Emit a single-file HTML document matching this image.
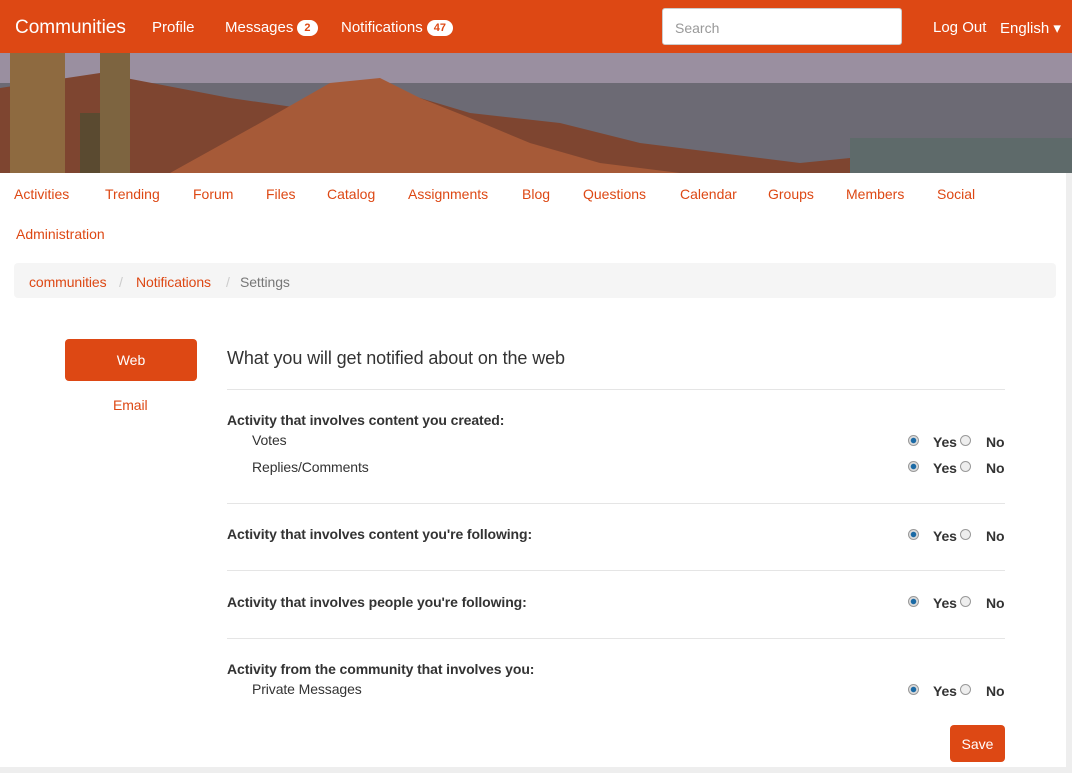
<!DOCTYPE html>
<html><head><style>
body{margin:0;width:1072px;height:773px;background:#eee;font-family:"Liberation Sans",sans-serif;font-size:14px;color:#333;overflow:hidden;position:relative}
.page{position:absolute;left:0;top:0;width:1066px;height:767px;background:#fff}
.nav{position:absolute;left:0;top:0;width:1072px;height:53px;background:#dd4814;color:#fff}
.nav span{position:absolute;top:19px;font-size:15px}
.badge{display:inline-block;background:#fff;color:#dd4814;border-radius:10px;font-size:11px;font-weight:bold;padding:2px 7px;margin-left:4px;vertical-align:1px}
.search{position:absolute;left:662px;top:8px;width:240px;height:37px;background:#fff;border:1px solid #ccc;border-radius:3px;box-sizing:border-box;color:#999;font-size:14px;padding:11px 12px}
.banner{position:absolute;left:0;top:53px;width:1072px;height:120px;overflow:hidden}
.tabs a{position:absolute;color:#dd4814;font-size:14px;text-decoration:none}
.bc{position:absolute;left:14px;top:263px;width:1042px;height:35px;background:#f5f5f5;border-radius:4px;font-size:14px}
.o{color:#dd4814}
.t{position:absolute;font-size:14px;letter-spacing:-0.1px}
.b{font-weight:bold}
hr{position:absolute;left:227px;width:778px;border:0;border-top:1px solid #e5e5e5;margin:0}
.r{position:absolute;width:11px;height:11px;border-radius:50%;border:1px solid #999;background:#eee;box-sizing:border-box}
.r.on{background:radial-gradient(circle,#1b6aa5 38%,#ddd 48%)}
</style></head><body>
<div class="page"></div>
<div class="nav">
<span style="left:15px;top:17px;font-size:19px">Communities</span>
<span style="left:152px">Profile</span>
<span style="left:225px">Messages<b class="badge">2</b></span>
<span style="left:341px">Notifications<b class="badge">47</b></span>
<div class="search">Search</div>
<span style="left:933px">Log Out</span>
<span style="left:1000px">English ▾</span>
</div>
<div class="banner">
<svg width="1072" height="120">
<rect width="1072" height="40" fill="#9a8fa0"/>
<rect y="30" width="1072" height="90" fill="#6c6a74"/>
<path d="M0 120 L0 35 L100 20 L230 45 L300 55 L340 30 L380 40 L420 45 L470 60 L560 70 L640 90 L720 100 L800 110 L900 100 L1072 95 L1072 120Z" fill="#7e4530"/>
<path d="M170 120 L260 70 L330 30 L380 25 L420 45 L470 65 L530 90 L600 110 L680 120Z" fill="#a65a38"/>
<rect x="10" y="0" width="55" height="120" fill="#8e6a40"/>
<rect x="100" y="0" width="30" height="120" fill="#7d6440"/>
<rect x="80" y="60" width="20" height="60" fill="#5a4a30"/>
<rect x="850" y="85" width="222" height="35" fill="#5e6a6a"/>
</svg></div>
<div class="tabs">
<a style="left:14px;top:186px">Activities</a><a style="left:105px;top:186px">Trending</a><a style="left:193px;top:186px">Forum</a><a style="left:266px;top:186px">Files</a><a style="left:327px;top:186px">Catalog</a><a style="left:408px;top:186px">Assignments</a><a style="left:522px;top:186px">Blog</a><a style="left:583px;top:186px">Questions</a><a style="left:680px;top:186px">Calendar</a><a style="left:768px;top:186px">Groups</a><a style="left:846px;top:186px">Members</a><a style="left:937px;top:186px">Social</a>
<a style="left:16px;top:226px">Administration</a></div>
<div class="bc"><span class="t o" style="left:15px;top:11px">communities</span><span class="t" style="left:105px;top:11px;color:#ccc">/</span><span class="t o" style="left:122px;top:11px">Notifications</span><span class="t" style="left:212px;top:11px;color:#ccc">/</span><span class="t" style="left:226px;top:11px;color:#777">Settings</span></div>
<div style="position:absolute;left:65px;top:339px;width:132px;height:42px;background:#dd4814;border-radius:4px;color:#fff;text-align:center;line-height:43px">Web</div>
<span class="t o" style="left:113px;top:397px">Email</span>
<span class="t" style="left:227px;top:348px;font-size:18px">What you will get notified about on the web</span>
<hr style="top:389px">
<span class="t b" style="left:227px;top:412px">Activity that involves content you created:</span>
<span class="t" style="left:252px;top:432px">Votes</span>
<span class="t" style="left:252px;top:459px">Replies/Comments</span>
<hr style="top:503px">
<span class="t b" style="left:227px;top:526px">Activity that involves content you're following:</span>
<hr style="top:570px">
<span class="t b" style="left:227px;top:594px">Activity that involves people you're following:</span>
<hr style="top:638px">
<span class="t b" style="left:227px;top:661px">Activity from the community that involves you:</span>
<span class="t" style="left:252px;top:681px">Private Messages</span>
<div id="radios"></div>
<div style="position:absolute;left:950px;top:725px;width:55px;height:37px;background:#dd4814;border-radius:4px;color:#fff;text-align:center;line-height:39px">Save</div>
<script>
var ys=[441,467,535,602,690],h='';
ys.forEach(function(y){h+='<div class="r on" style="left:908px;top:'+(y-6)+'px"></div><span class="t b" style="left:933px;top:'+(y-7)+'px">Yes</span><div class="r" style="left:960px;top:'+(y-6)+'px"></div><span class="t b" style="left:986px;top:'+(y-7)+'px">No</span>';});
document.getElementById('radios').innerHTML=h;
</script>
</body></html>
